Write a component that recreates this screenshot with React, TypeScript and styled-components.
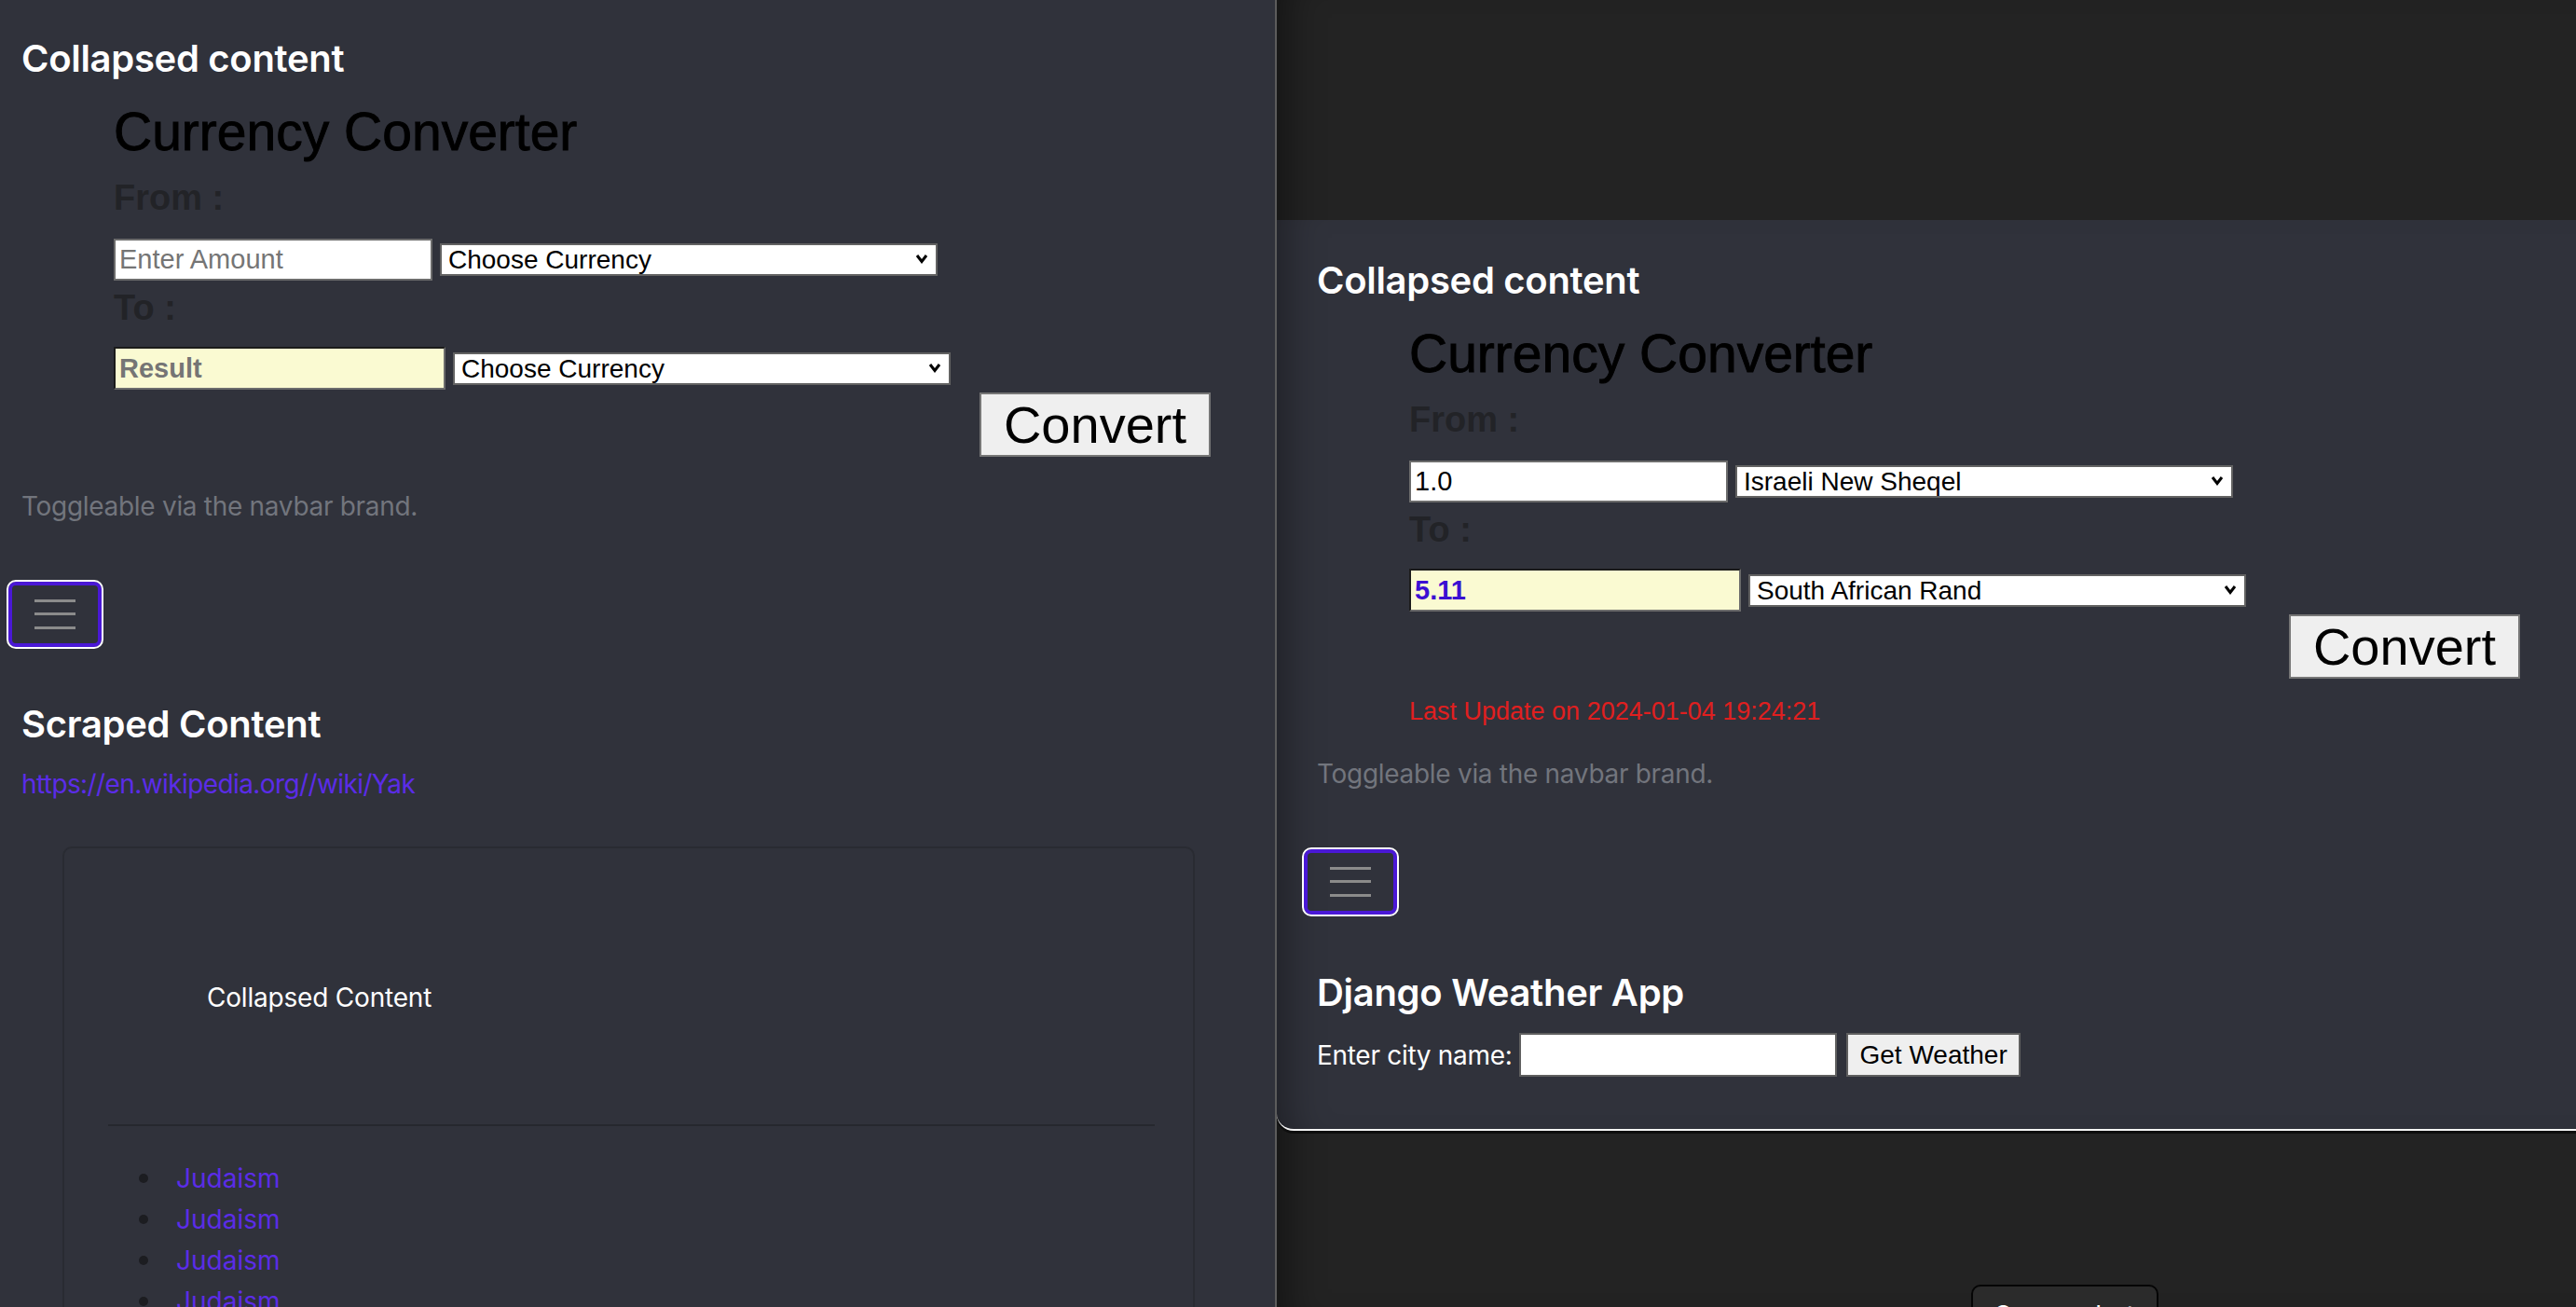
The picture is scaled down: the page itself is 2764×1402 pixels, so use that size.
import styled, { createGlobalStyle } from "styled-components";

const GlobalStyle = createGlobalStyle`
  * {
    box-sizing: border-box;
  }
  html,
  body {
    margin: 0;
    padding: 0;
  }
  body {
    background: #232323;
    font-family: Inter, "Noto Sans", sans-serif;
  }
`;

const Page = styled.div`
  display: flex;
  width: 2764px;
  height: 1402px;
  overflow: hidden;
`;

const LeftPane = styled.div`
  width: 1370px;
  flex-shrink: 0;
  padding: 39px 23px 0;
  background: #30323b;
  border-right: 2px solid #5c5c5c;
  overflow: hidden;
`;

const RightPane = styled.div`
  flex: 1;
  display: flex;
  flex-direction: column;
  padding-top: 236px;
  background: #232323;
  box-shadow: inset 40px 0 40px -30px rgba(0, 0, 0, 0.45);
  overflow: hidden;
`;

const WindowCard = styled.div`
  padding: 41px 43px 56px;
  background: #30323b;
  border-bottom: 2px solid #f4f4f4;
  border-bottom-left-radius: 18px;
  box-shadow: inset 40px 0 40px -30px rgba(0, 0, 0, 0.35), 0 3px 0 #0e0e0e;
`;

const Heading = styled.h5<{ $top?: number }>`
  margin: ${(p) => p.$top ?? 0}px 0 0;
  font-size: 40px;
  font-weight: 600;
  line-height: 48px;
  letter-spacing: -0.3px;
  color: #ffffff;
`;

const Converter = styled.form<{ $width: number }>`
  width: ${(p) => p.$width}px;
  margin: 22px 0 0 99px;
`;

const Title = styled.h2`
  margin: 0;
  font-family: "Liberation Sans", Arial, sans-serif;
  font-size: 57px;
  font-weight: 400;
  line-height: 64px;
  color: #000000;
  -webkit-text-stroke: 0.9px #000000;
`;

const FieldLabel = styled.div<{ $top: number }>`
  margin-top: ${(p) => p.$top}px;
  font-family: "Liberation Sans", Arial, sans-serif;
  font-size: 38px;
  font-weight: 700;
  line-height: 46px;
  color: #222327;
`;

const FieldRow = styled.div<{ $top: number }>`
  display: flex;
  align-items: center;
  gap: 8px;
  margin-top: ${(p) => p.$top}px;
`;

const AmountInput = styled.input<{ $result?: boolean }>`
  width: ${(p) => (p.$result ? 356 : 342)}px;
  height: ${(p) => (p.$result ? 46 : 45)}px;
  padding: 0 4px;
  font-family: "Liberation Sans", Arial, sans-serif;
  font-size: 29px;
  font-weight: ${(p) => (p.$result ? 700 : 400)};
  color: ${(p) => (p.$result ? "#3b10d2" : "#000000")};
  background: ${(p) => (p.$result ? "#fafad2" : "#ffffff")};
  border: 2px solid #6c6c6c;
  border-top-color: ${(p) => (p.$result ? "#1b1b1b" : "#6c6c6c")};
  border-left-color: ${(p) => (p.$result ? "#1b1b1b" : "#6c6c6c")};
  border-radius: 0;
  outline: none;

  &::placeholder {
    color: #757575;
  }
`;

const SelectBox = styled.div`
  position: relative;
  width: 534px;
  height: 35px;
`;

const CurrencySelect = styled.select`
  width: 100%;
  height: 100%;
  padding: 0 30px 0 7px;
  font-family: "Liberation Sans", Arial, sans-serif;
  font-size: 28px;
  color: #000000;
  background: #ffffff;
  border: 2px solid #626262;
  border-radius: 0;
  appearance: none;
  outline: none;
`;

const Chevron = styled.svg`
  position: absolute;
  top: 11px;
  right: 10px;
  pointer-events: none;
`;

const ConvertRow = styled.div`
  display: flex;
  justify-content: flex-end;
  margin-top: 3px;
`;

const ConvertButton = styled.button`
  height: 69px;
  padding: 0 24px;
  font-family: "Liberation Sans", Arial, sans-serif;
  font-size: 56px;
  line-height: 1;
  color: #000000;
  background: #efefef;
  border: 2px solid #767676;
  border-radius: 0;
`;

const UpdateNote = styled.div`
  margin-top: 15px;
  font-family: "Liberation Sans", Arial, sans-serif;
  font-size: 27px;
  line-height: 40px;
  color: #e01f1f;
`;

const Muted = styled.p<{ $top: number }>`
  margin: ${(p) => p.$top}px 0 0;
  font-size: 28px;
  line-height: 40px;
  letter-spacing: -0.3px;
  color: #72757d;
`;

const Toggler = styled.button`
  display: flex;
  align-items: center;
  justify-content: center;
  width: 104px;
  height: 74px;
  margin: 59px 0 0 -16px;
  padding: 0;
  background: transparent;
  border: 2px solid #ffffff;
  border-radius: 10px;
  box-shadow: inset 0 0 0 4px #4a18d6;
`;

const ScrapeLink = styled.a`
  display: block;
  margin-top: 20px;
  font-size: 28px;
  line-height: 40px;
  letter-spacing: -0.6px;
  color: #5b2ce8;
  text-decoration: none;
`;

const ScrapeCard = styled.div`
  margin: 47px 63px 0 44px;
  padding: 140px 41px 0 47px;
  border: 2px solid #292b32;
  border-radius: 10px;
`;

const CardText = styled.div`
  padding-left: 106px;
  font-size: 28px;
  line-height: 40px;
  letter-spacing: -0.2px;
  color: #ffffff;
`;

const Divider = styled.hr`
  margin: 116px 0 0;
  border: 0;
  border-top: 2px solid #26282e;
`;

const LinkList = styled.ul`
  margin: 34px 0 0;
  padding: 0 0 0 33px;
  list-style: none;
`;

const LinkItem = styled.li`
  display: flex;
  align-items: center;
  gap: 30px;
  height: 44px;
  font-size: 28px;

  &::before {
    content: "";
    width: 10px;
    height: 10px;
    border-radius: 50%;
    background: #1c1d21;
  }

  a {
    color: #5b2ce8;
    text-decoration: none;
  }
`;

const CityRow = styled.div`
  display: flex;
  align-items: center;
  gap: 8px;
  margin-top: 19px;
`;

const CityLabel = styled.label`
  font-size: 28px;
  line-height: 40px;
  letter-spacing: -0.3px;
  color: #ffffff;
`;

const CityInput = styled.input`
  width: 341px;
  height: 47px;
  padding: 0 4px;
  font-size: 28px;
  background: #ffffff;
  border: 2px solid #5f5f5f;
  border-radius: 0;
`;

const SmallButton = styled.button`
  height: 47px;
  margin-left: 2px;
  padding: 0 12px;
  font-family: "Liberation Sans", Arial, sans-serif;
  font-size: 28px;
  color: #000000;
  background: #efefef;
  border: 2px solid #5f5f5f;
  border-radius: 0;
`;

const Footer = styled.div`
  display: flex;
  margin-top: 165px;
  padding-left: 745px;
`;

const ScreenshotButton = styled.button`
  display: flex;
  justify-content: center;
  align-items: flex-start;
  width: 201px;
  height: 62px;
  padding: 17px 0 0;
  font-family: Inter, sans-serif;
  font-size: 28px;
  line-height: 1;
  color: #ffffff;
  background: #2b2b2b;
  border: 2px solid #050505;
  border-radius: 10px;
`;

function Currency({ value }: { value: string }) {
  return (
    <SelectBox>
      <CurrencySelect value={value} onChange={() => {}}>
        <option>{value}</option>
      </CurrencySelect>
      <Chevron width="14" height="11" viewBox="0 0 14 11">
        <path d="M2 2 L7 8.5 L12 2" fill="none" stroke="#000" strokeWidth="3" />
      </Chevron>
    </SelectBox>
  );
}

function MenuLines() {
  return (
    <svg width="44" height="32" viewBox="0 0 44 32">
      <rect x="0" y="0" width="44" height="3" fill="#8b8b8b" />
      <rect x="0" y="14" width="44" height="3" fill="#8b8b8b" />
      <rect x="0" y="29" width="44" height="3" fill="#8b8b8b" />
    </svg>
  );
}

type ConverterProps = {
  width: number;
  amount?: string;
  result?: string;
  from: string;
  to: string;
  lastUpdate?: string;
};

function CurrencyConverter({ width, amount, result, from, to, lastUpdate }: ConverterProps) {
  return (
    <Converter $width={width} onSubmit={(e) => e.preventDefault()}>
      <Title>Currency Converter</Title>
      <FieldLabel $top={16}>From :</FieldLabel>
      <FieldRow $top={21}>
        <AmountInput placeholder="Enter Amount" defaultValue={amount} />
        <Currency value={from} />
      </FieldRow>
      <FieldLabel $top={6}>To :</FieldLabel>
      <FieldRow $top={19}>
        <AmountInput $result placeholder="Result" defaultValue={result} readOnly />
        <Currency value={to} />
      </FieldRow>
      <ConvertRow>
        <ConvertButton type="submit">Convert</ConvertButton>
      </ConvertRow>
      {lastUpdate && <UpdateNote>Last Update on {lastUpdate}</UpdateNote>}
    </Converter>
  );
}

export default function App() {
  return (
    <>
      <GlobalStyle />
      <Page>
        <LeftPane>
          <Heading>Collapsed content</Heading>
          <CurrencyConverter width={1177} from="Choose Currency" to="Choose Currency" />
          <Muted $top={33}>Toggleable via the navbar brand.</Muted>
          <Toggler type="button">
            <MenuLines />
          </Toggler>
          <Heading $top={57}>Scraped Content</Heading>
          <ScrapeLink href="#">https://en.wikipedia.org//wiki/Yak</ScrapeLink>
          <ScrapeCard>
            <CardText>Collapsed Content</CardText>
            <Divider />
            <LinkList>
              {[0, 1, 2, 3, 4].map((i) => (
                <LinkItem key={i}>
                  <a href="#">Judaism</a>
                </LinkItem>
              ))}
            </LinkList>
          </ScrapeCard>
        </LeftPane>
        <RightPane>
          <WindowCard>
            <Heading>Collapsed content</Heading>
            <CurrencyConverter
              width={1192}
              amount="1.0"
              result="5.11"
              from="Israeli New Sheqel"
              to="South African Rand"
              lastUpdate="2024-01-04 19:24:21"
            />
            <Muted $top={27}>Toggleable via the navbar brand.</Muted>
            <Toggler type="button">
              <MenuLines />
            </Toggler>
            <Heading $top={58}>Django Weather App</Heading>
            <CityRow>
              <CityLabel>Enter city name:</CityLabel>
              <CityInput />
              <SmallButton type="button">Get Weather</SmallButton>
            </CityRow>
          </WindowCard>
          <Footer>
            <ScreenshotButton type="button">Screenshot</ScreenshotButton>
          </Footer>
        </RightPane>
      </Page>
    </>
  );
}
